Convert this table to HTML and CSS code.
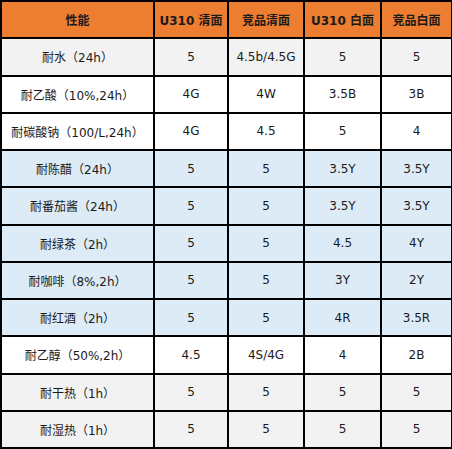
FILE: index.html
```html
<!DOCTYPE html>
<html lang="zh">
<head>
<meta charset="utf-8">
<title>性能对比</title>
<link rel="stylesheet" href="styles.css">
</head>
<body>
<table class="cmp">
  <colgroup>
    <col class="c1"><col class="c2"><col class="c3"><col class="c4"><col class="c5">
  </colgroup>
  <tbody>
    <tr class="head"><th>性能</th><th>U310 清面</th><th>竞品清面</th><th>U310 白面</th><th>竞品白面</th></tr>
    <tr class="grey"><td>耐水（24h）</td><td>5</td><td>4.5b/4.5G</td><td>5</td><td>5</td></tr>
    <tr class="white"><td>耐乙酸（10%,24h）</td><td>4G</td><td>4W</td><td>3.5B</td><td>3B</td></tr>
    <tr class="white"><td>耐碳酸钠（100/L,24h）</td><td>4G</td><td>4.5</td><td>5</td><td>4</td></tr>
    <tr class="blue"><td>耐陈醋（24h）</td><td>5</td><td>5</td><td>3.5Y</td><td>3.5Y</td></tr>
    <tr class="blue"><td>耐番茄酱（24h）</td><td>5</td><td>5</td><td>3.5Y</td><td>3.5Y</td></tr>
    <tr class="blue"><td>耐绿茶（2h）</td><td>5</td><td>5</td><td>4.5</td><td>4Y</td></tr>
    <tr class="blue"><td>耐咖啡（8%,2h）</td><td>5</td><td>5</td><td>3Y</td><td>2Y</td></tr>
    <tr class="blue"><td>耐红酒（2h）</td><td>5</td><td>5</td><td>4R</td><td>3.5R</td></tr>
    <tr class="white"><td>耐乙醇（50%,2h）</td><td>4.5</td><td>4S/4G</td><td>4</td><td>2B</td></tr>
    <tr class="grey"><td>耐干热（1h）</td><td>5</td><td>5</td><td>5</td><td>5</td></tr>
    <tr class="grey"><td>耐湿热（1h）</td><td>5</td><td>5</td><td>5</td><td>5</td></tr>
  </tbody>
</table>
</body>
</html>
```
FILE: styles.css
```css
html, body {
  margin: 0;
  padding: 0;
  background: #ffffff;
}
body {
  font-family: "DejaVu Sans", "Noto Sans CJK TC", sans-serif;
  font-size: 12px;
  color: #1a1a1a;
}
.cmp {
  border-collapse: collapse;
  width: 451px;
  table-layout: fixed;
}
.c1 { width: 153px; }
.c2 { width: 74px; }
.c3 { width: 76px; }
.c4 { width: 77px; }
.c5 { width: 71px; }
.cmp tr {
  height: 37.25px;
}
.cmp th, .cmp td {
  border: 2px solid #000;
  text-align: center;
  vertical-align: middle;
  padding: 0;
  white-space: nowrap;
}
.cmp th {
  font-weight: bold;
}
.head { background: #ed7d31; }
.grey { background: #f2f2f2; }
.white { background: #ffffff; }
.blue { background: #ddebf7; }
```
